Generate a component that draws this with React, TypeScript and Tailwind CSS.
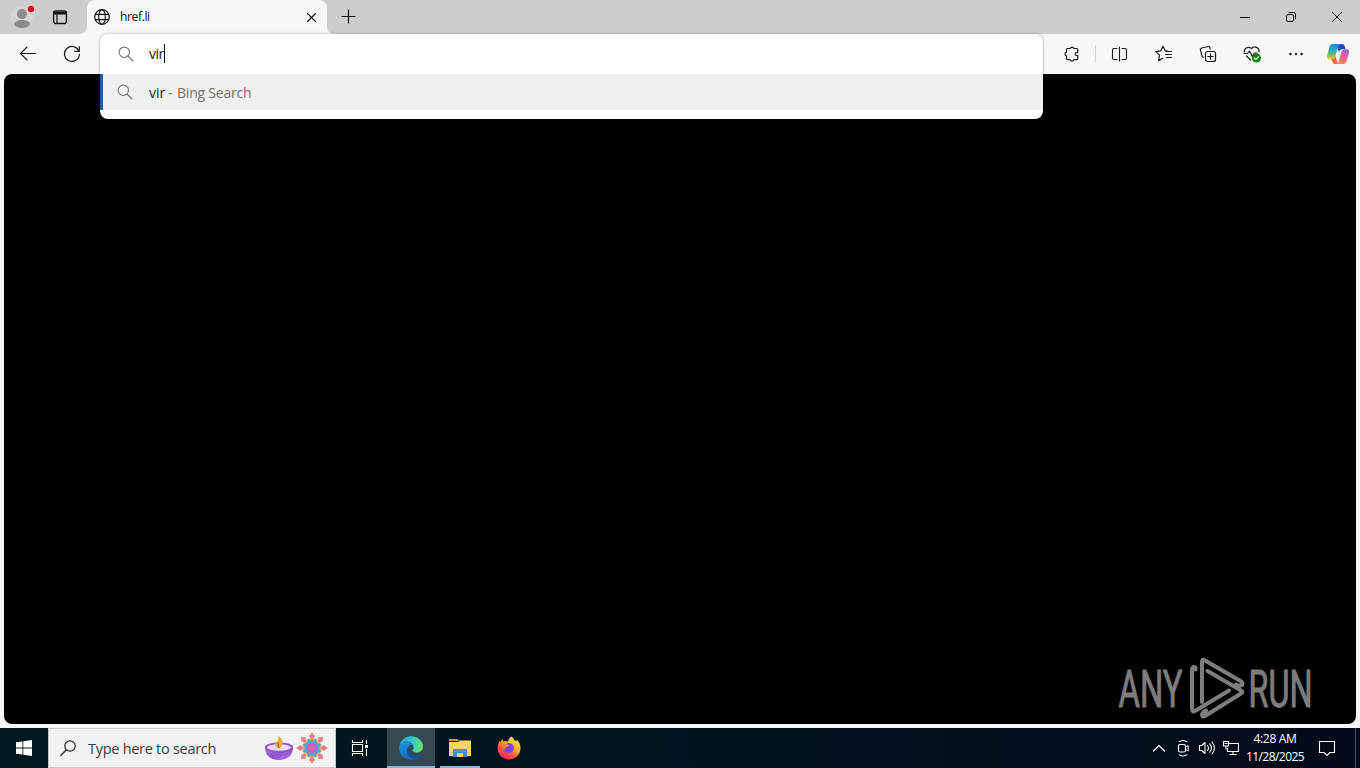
import React from 'react';

type IconProps = { w: number; h: number; children: React.ReactNode; className?: string };

function Icon({ w, h, children, className }: IconProps) {
  return (
    <svg width={w} height={h} viewBox={`0 0 ${w} ${h}`} fill="none" stroke="currentColor" strokeLinecap="round" strokeLinejoin="round" className={`shrink-0 ${className ?? ''}`}>
      {children}
    </svg>
  );
}

function Cell({ children, className }: { children: React.ReactNode; className: string }) {
  return <div className={`flex h-full shrink-0 items-center justify-center ${className}`}>{children}</div>;
}

function TabStrip() {
  return (
    <header className="flex h-[34px] bg-[#cdcdcd] text-[#111]">
      <Cell className="w-[44px]">
        <Icon w={28} h={28}>
          <circle cx="14" cy="14" r="11" fill="#d6d3d1" stroke="none" />
          <circle cx="14" cy="11" r="5" fill="#8f8b88" stroke="none" />
          <ellipse cx="14" cy="21" rx="8" ry="4" fill="#8f8b88" stroke="none" />
          <circle cx="23" cy="6" r="4.5" fill="#e2d3d3" stroke="none" />
          <circle cx="23" cy="6" r="3.2" fill="#d30b25" stroke="none" />
        </Icon>
      </Cell>
      <Cell className="w-[32px]">
        <Icon w={16} h={16}>
          <rect x="1.6" y="1.8" width="12.8" height="12.7" rx="2" strokeWidth="1.3" />
          <path d="M2 3.4h12M2 4.6h12" strokeWidth="1.6" />
          <path d="M5 5.5v8.5" strokeWidth="1.2" />
        </Icon>
      </Cell>
      <Icon w={11} h={34}>
        <path d="M3 34Q11 34 11 26V34Z" fill="#f7f7f7" stroke="none" />
      </Icon>
      <div className="flex w-[240px] shrink-0 items-center rounded-t-[8px] bg-[#f7f7f7] pr-[10px] pl-[7px]">
        <Icon w={16} h={16}>
          <circle cx="8" cy="8" r="7.3" strokeWidth="1.2" />
          <ellipse cx="8" cy="8" rx="3.3" ry="7.3" strokeWidth="1.1" />
          <path d="M1.5 5.4h13M1.5 10.6h13" strokeWidth="1.1" />
        </Icon>
        <span className="ml-[10px] flex-1 text-[12px] leading-4 tracking-[-0.35px]">href.li</span>
        <Icon w={12} h={12}>
          <path d="M2.5 2.5l8 8M10.500 2.500l-8 8" strokeWidth="1.1" />
        </Icon>
      </div>
      <Icon w={8} h={34}>
        <path d="M8 34Q0 34 0 26V34Z" fill="#f7f7f7" stroke="none" />
      </Icon>
      <Cell className="w-[27px]">
        <Icon w={16} h={16}>
          <path d="M7.500 1v13M1 7.500h13" strokeWidth="1.2" />
        </Icon>
      </Cell>
      <div className="flex-1" />
      <Cell className="w-[46px]">
        <Icon w={12} h={12}><path d="M1 6.5h10" strokeLinecap="butt" /></Icon>
      </Cell>
      <Cell className="w-[46px]">
        <Icon w={12} h={12}>
          <rect x="1.5" y="3.5" width="7" height="7" rx="1.5" />
          <path d="M4 1.5h4.5a2 2 0 0 1 2 2V8" />
        </Icon>
      </Cell>
      <Cell className="w-[46px]">
        <Icon w={12} h={12}><path d="M1.2 1.2l9.6 9.6M10.8 1.2L1.2 10.8" /></Icon>
      </Cell>
    </header>
  );
}

function CopilotIcon() {
  return (
    <svg width="24" height="22" viewBox="0 0 24 22">
      <defs>
        <linearGradient id="cpA" x1="0.4" y1="0" x2="0.3" y2="1">
          <stop offset="0" stopColor="#1b8de4" />
          <stop offset="0.4" stopColor="#24b0c7" />
          <stop offset="0.7" stopColor="#77bd55" />
          <stop offset="1" stopColor="#f2c91d" />
        </linearGradient>
        <linearGradient id="cpB" x1="0.8" y1="0" x2="0.3" y2="1">
          <stop offset="0" stopColor="#a35de0" />
          <stop offset="0.5" stopColor="#ed609b" />
          <stop offset="1" stopColor="#ff9355" />
        </linearGradient>
      </defs>
      <path d="M12 1h4c1.500 0 2.200.8 2.700 2.400l.9 2.800h-3.200c-2 0-2.700 1-3.300 3L11 4Z" fill="#1d4fb8" />
      <path d="M6.500 1h8.200c-1.700.4-2.300 2-2.900 4l-2.500 8c-.7 2.300-1.700 3.300-4 3.300H3.500C1 16.300 .5 14.500 1.200 12L3.400 4C4 2 4.800 1 6.500 1Z" fill="url(#cpA)" />
      <path d="M5 16.200c2.600 0 3.700-1 4.300-3.200l.7 2c.8 2.500 1 5 3 6H9.500c-1.700 0-2.400-.8-3-2.500Z" fill="#ee6540" />
      <path d="M17.500 21H10c1.700-.4 2.400-2 3-4l2.300-7.500c.7-2.300 1.700-3.300 4-3.300h1.300c2.400 0 2.900 1.700 2.200 4.200L20.600 18c-.6 2-1.400 3-3.100 3Z" fill="url(#cpB)" />
    </svg>
  );
}

function Toolbar() {
  return (
    <div className="flex h-10 bg-[#f7f7f7] pr-[2px] text-[#1b1b1b]">
      <Cell className="w-[56px]">
        <Icon w={18} h={16}><path d="M16.500 7.500H1.500M8 1L1.500 7.500 8 14" strokeWidth="1.100" /></Icon>
      </Cell>
      <Cell className="w-[32px]">
        <Icon w={18} h={18}>
          <path d="M16 6.200A7.500 7.500 0 1 0 16.500 9.300" strokeWidth="1.200" />
          <path d="M16.300 1.600v4.700h-4.700" strokeWidth="1.200" />
        </Icon>
      </Cell>
      <div className="flex-1" />
      <Cell className="w-[44px] pr-[1px]">
        <Icon w={19} h={18}>
          <path d="M4.500 3.500h2.700a1.900 1.900 0 0 1 3.700 0h2.800a1 1 0 0 1 1 1v3h-1a1.500 1.500 0 0 0 0 3h1v3.200a1 1 0 0 1-1 1h-2.800a1.900 1.900 0 0 1-3.700 0H4.500a1 1 0 0 1-1-1v-2.800a1.900 1.900 0 0 1 0-3.700V4.500a1 1 0 0 1 1-1Z" strokeWidth="1.200" />
        </Icon>
      </Cell>
      <div className="mr-[2px] my-[11px] w-px bg-[#d5d5d5]" />
      <Cell className="w-[44px]">
        <Icon w={18} h={16}>
          <path d="M6 2.500H3a1.500 1.500 0 0 0-1.500 1.500v8A1.500 1.500 0 0 0 3 13.500h3M11 2.500h3a1.500 1.500 0 0 1 1.500 1.500v8a1.500 1.500 0 0 1-1.500 1.500h-3M8.500 1v14" strokeWidth="1.100" />
        </Icon>
      </Cell>
      <Cell className="w-[44px]">
        <Icon w={18} h={18}>
          <path d="M12.300 6l-2-.3L8 1.300 5.800 5.800l-5 .8 3.700 3.500-.9 5.500 4.200-2.300" strokeWidth="1.200" />
          <path d="M11 6.500h5.500M10.500 9.500h6M11.500 12.500h5" strokeWidth="1.200" />
        </Icon>
      </Cell>
      <Cell className="w-[44px]">
        <Icon w={18} h={18}>
          <rect x="6.500" y="6.500" width="10" height="10" rx="2" strokeWidth="1.200" />
          <path d="M11.500 8.800v5.400M8.800 11.500h5.400" strokeWidth="1.200" />
          <path d="M11.200 4.200l-.4-1.700a1.400 1.400 0 0 0-1.700-1L2.700 3A1.500 1.500 0 0 0 1.400 4.900l1.600 6a2 2 0 0 0 1.300 1.400" strokeWidth="1.200" />
        </Icon>
      </Cell>
      <Cell className="w-[44px]">
        <Icon w={20} h={18}>
          <path d="M2.300 7A4.300 4.300 0 0 1 9.500 3.500 4.300 4.300 0 0 1 17 7M4.500 11l4 4" strokeWidth="1.200" />
          <path d="M2 8.500h3.500L7.500 6l2.800 5.500 2-3.500h3" strokeWidth="1.200" />
          <circle cx="14.500" cy="13" r="4.500" fill="#16811d" stroke="none" />
          <path d="M12.400 13l1.500 1.500 2.800-2.900" stroke="#e8f6e8" strokeWidth="1.100" />
        </Icon>
      </Cell>
      <Cell className="w-[44px]">
        <Icon w={16} h={4}>
          <g fill="#222" stroke="none"><circle cx="2.500" cy="2" r="1.300" /><circle cx="8" cy="2" r="1.300" /><circle cx="13.500" cy="2" r="1.300" /></g>
        </Icon>
      </Cell>
      <Cell className="w-[40px]"><CopilotIcon /></Cell>
    </div>
  );
}

function SearchGlyph() {
  return (
    <Icon w={16} h={16} className="text-[#707070]">
      <circle cx="6.300" cy="6.300" r="5.200" strokeWidth="1.100" />
      <path d="M10 10l5 5" strokeWidth="1.100" />
    </Icon>
  );
}

function AddressDropdown() {
  return (
    <div className="absolute top-[34px] left-[100px] h-[85px] w-[943px] overflow-hidden rounded-[8px] bg-white shadow-[0_0_3px_rgba(0,0,0,0.35)]">
      <div className="flex h-10 items-center pl-[18px]">
        <SearchGlyph />
        <span className="ml-[15px] w-[15px] text-[14px] leading-5 tracking-[-0.500px] text-[#1b1b1b]">vir</span>
        <span className="mb-[2px] h-[19px] w-px bg-black" />
      </div>
      <div className="flex h-9 items-center border-l-[3px] border-[#19609f] bg-[#f0f0f0] pb-[1px] pl-[14px]">
        <SearchGlyph />
        <span className="mt-[2px] ml-[16px] text-[14px] leading-5 text-[#1b1b1b]">
          vir <span className="-ml-px text-[#717171]">- </span><span className="ml-px tracking-[-0.230px] text-[#717171]">Bing Search</span>
        </span>
      </div>
    </div>
  );
}

function Watermark() {
  return (
    <svg width="198" height="64" viewBox="1118 657 198 64" fill="none" stroke="#7d7d7d" strokeWidth="4" strokeLinejoin="round" strokeLinecap="round" className="overflow-visible">
      <g fill="#7d7d7d" stroke="#7d7d7d" strokeWidth="1" fontFamily="Roboto, sans-serif" fontSize="51.500">
        <text x="1118.500" y="707" textLength="64" lengthAdjust="spacingAndGlyphs">ANY</text>
        <text x="1248.500" y="707" textLength="64" lengthAdjust="spacingAndGlyphs">RUN</text>
      </g>
      <path d="M1202 702V662q0-3.500 3-1.500L1240.500 681q3 2 1.500 4l-3 1-3-1.500" />
      <path d="M1207.500 671L1241 690.500q2.500 1.500 0 3L1205 716q-3 1.500-3-1.500l1-2 3-2" />
      <path d="M1195.500 669.500v-2q-3.500-1.500-3.500 2.500V709q0 3.500 3 2L1229 690.500" />
    </svg>
  );
}

function Diya() {
  return (
    <svg width="30" height="26" viewBox="0 0 30 26">
      <defs>
        <linearGradient id="bowl" x1="0" y1="0" x2="1" y2="1"><stop stopColor="#a769df" /><stop offset=".55" stopColor="#8c48cb" /><stop offset="1" stopColor="#ba89eb" /></linearGradient>
      </defs>
      <path d="M1 12c0 8 5 13 14 13s14-5 14-13Z" fill="url(#bowl)" />
      <ellipse cx="15" cy="12" rx="14" ry="4.500" fill="#9551ce" />
      <ellipse cx="15" cy="12.500" rx="12" ry="3.300" fill="#eadcf6" />
      <path d="M15 14c-5-3-4-6-1-9 .7-1.500.4-3 0-4 5 2 7 8 1 13Z" fill="#f5ad3e" />
      <path d="M14 7l.5 6" stroke="#b9603b" strokeWidth="1.200" />
      <path d="M4 18l3-.5 3 2 4-1 4 1 4-2 3 .5M10 22l5-1 5 1" stroke="#ab7bdc" strokeWidth=".7" fill="none" />
    </svg>
  );
}

const petals = [0, 45, 90, 135, 180, 225, 270, 315];

function Rangoli() {
  return (
    <svg width="32" height="32" viewBox="-16 -16 32 32">
      {petals.map((a) => (
        <g key={a} transform={`rotate(${a})`}>
          <path d="M0-13L4.500-6h-9Z" fill="#f7b94f" />
          <path d="M0-15.800l3 4L0-8-3-11.800Z" fill="#ea7d90" />
        </g>
      ))}
      {petals.map((a) => (
        <path key={a} d="M0-10.500L3.500-5h-7Z" fill="#4aaccb" transform={`rotate(${a + 22.5})`} />
      ))}
      <circle r="7.500" fill="#53a5d1" />
      {petals.map((a) => (
        <path key={a} d="M0-7l2.500 4h-5Z" fill="#a56bce" transform={`rotate(${a})`} />
      ))}
      <circle r="4.500" fill="#c465bd" />
      <circle r="2" fill="#e3649b" />
    </svg>
  );
}

function EdgeLogo() {
  return (
    <svg width="24" height="24" viewBox="0 0 24 24">
      <defs>
        <linearGradient id="edTop" x1="0" y1=".4" x2="1" y2=".5"><stop stopColor="#279fd9" /><stop offset=".5" stopColor="#35c6cf" /><stop offset="1" stopColor="#65e36b" /></linearGradient>
        <linearGradient id="edBody" x1="0" y1="0" x2=".6" y2="1"><stop stopColor="#1c9de0" /><stop offset="1" stopColor="#0f5eb5" /></linearGradient>
      </defs>
      <path d="M.2 11C1 4.500 6 .2 12 .2c7 0 12 5 12 10.300 0 4-3 6-6.300 6-2.700 0-4.200-.9-4.200-1.900 0-.8 1.100-1.100 1.100-3.100C14.600 8.200 11.500 5.500 7.500 5.500 4 5.500 1.300 7.500.2 11Z" fill="url(#edTop)" />
      <path d="M.1 12.500C0 8.300 3.700 5.800 7.500 5.800c3.600 0 6 2 6.800 4-1-1.200-4-.9-5.300 1.400-2.700 4.900 2 11 8 10 1.700-.3 3-.9 4.200-1.700C19.200 22.100 16 24 12 24 5.600 24 .2 18.800.1 12.500Z" fill="url(#edBody)" />
      <path d="M9.300 10.800c-3.600 4.200-.9 11.500 6 11.500 2.600 0 4.800-1 6.300-3 .5-.7 0-1.200-.7-.8-5.500 2.700-12-.6-11.600-7.700Z" fill="#134f94" />
    </svg>
  );
}

function FolderIcon() {
  return (
    <svg width="22" height="20" viewBox="0 0 22 20">
      <path d="M0 1.500Q0 1 .6 1h8l1.600 2H0Z" fill="#e39b1d" />
      <path d="M0 4h9l1.500-1.500h11q.5 0 .5.600V18H0Z" fill="#fbd36b" />
      <path d="M4 19v-7q0-1 1-1h12q1 0 1 1v7h-4v-4H8v4Z" fill="#3b8dc7" />
      <path d="M8 19v-4h6v4Z" fill="#fbd36b" />
      <path d="M5 13h12" stroke="#62a6d4" strokeWidth="1" />
    </svg>
  );
}

function FirefoxIcon() {
  return (
    <svg width="24" height="24" viewBox="0 0 24 24">
      <defs>
        <linearGradient id="ff" x1=".85" y1="0" x2=".2" y2="1"><stop stopColor="#ffef43" /><stop offset=".4" stopColor="#ffaf29" /><stop offset=".68" stopColor="#ff513f" /><stop offset="1" stopColor="#f21780" /></linearGradient>
      </defs>
      <path d="M14.500.5c1.500 1 2.300 2.400 2.700 4 1.200-.2 2 .3 2.600 1.200-.1-1-.4-1.800-.8-2.500C22 5 23.500 8.500 23.500 12.300 23.500 18.700 18.300 23.500 12 23.500S.5 18.600.5 12.300c0-3 .9-5.500 2.600-7.800-.2 1 0 1.500.3 2C4 4.800 4.600 3.800 5.600 3c0 1 .3 2 .9 2.500C8.300 4.600 9.900 4.800 11 5.800 11.300 3.600 12.500 1.700 14.500.5Z" fill="url(#ff)" />
      <path d="M8.500 8.500C10 6 15 6.500 16.300 9.500s0 7-3.500 7.300-6-1-6-4.300Z" fill="#7843d8" />
      <path d="M4.500 8.500c2-1.200 4-.9 5.500.1l2.600.2c-.2 1.600-2 1.700-2.900 2.200-.8.500-1.300 1.500-3 3Z" fill="#ff8132" />
    </svg>
  );
}

function Taskbar() {
  return (
    <footer className="flex h-10 bg-linear-to-r from-[#021820] via-[#02141f] to-[#020a19] text-white">
      <Cell className="w-[48px]">
        <svg width="16" height="16" viewBox="0 0 16 16" fill="#fff"><path d="M0 2.300L6.500 1.400V7.500H0ZM7.300 1.300L16 0V7.500H7.300ZM0 8.400H6.500V14.600L0 13.700ZM7.300 8.400H16V16L7.300 14.700Z" /></svg>
      </Cell>
      <div className="flex w-[288px] shrink-0 items-center border border-[#c9c9c9] bg-[#f2f2f2] pl-[11px] text-[#3c3c3c]">
        <Icon w={16} h={17} className="text-[#222]">
          <circle cx="10" cy="6" r="5.200" strokeWidth="1.200" />
          <path d="M6.200 10L.8 15.500" strokeWidth="1.200" />
        </Icon>
        <span className="mt-[1px] ml-[12px] w-[176px] text-[14.500px] leading-5 whitespace-nowrap tracking-[-0.280px]">Type here to search</span>
        <div className="flex items-center gap-[2px]"><Diya /><Rangoli /></div>
      </div>
      <Cell className="w-[48px]">
        <Icon w={18} h={16}>
          <path d="M1.500 0v2.500h10V0M1.500 16v-2.500h10V16M1.500 4.500h10v7h-10ZM15.500 0v4M15.500 9v7" strokeLinecap="butt" strokeLinejoin="miter" strokeWidth="1.100" />
          <path d="M14 5h3v3h-3Z" fill="#fff" stroke="none" />
        </Icon>
      </Cell>
      <div className="ml-[3px] flex w-[48px] shrink-0 items-center justify-center border-b-2 border-[#76b9ed] bg-[#334850] pt-[2px]"><EdgeLogo /></div>
      <div className="mx-[5px] flex w-[40px] shrink-0 items-center justify-center border-b-2 border-[#76b9ed] pt-[2px]"><FolderIcon /></div>
      <Cell className="w-[48px]"><FirefoxIcon /></Cell>
      <div className="flex-1" />
      <Cell className="w-[24px]">
        <Icon w={14} h={8}><path d="M1.500 7L7 1.500 12.500 7" strokeWidth="1.200" /></Icon>
      </Cell>
      <Cell className="w-[24px]">
        <Icon w={16} h={18}>
          <rect x="3.500" y="5.500" width="7" height="7.500" rx="1.500" strokeWidth="1.200" />
          <path d="M10.700 8l2.500-1.500v5.500l-2.500-1.500M4 2.500q4-2.500 8 0M4 16q4 2.500 8 0" />
        </Icon>
      </Cell>
      <Cell className="w-[24px]">
        <Icon w={18} h={16}>
          <path d="M1.500 5.500h2.300L7 2.500v11l-3.200-3H1.500ZM9.500 5.500q2 2.500 0 5M11.800 3.800q3.300 4.200 0 8.400M14 2q5 6 0 12" strokeWidth="1.100" />
        </Icon>
      </Cell>
      <Cell className="w-[24px]">
        <Icon w={16} h={16}>
          <path d="M6 3.500h9.500v8H4.500V8M10 11.500v3M6.500 14.500h7M.5 1.500h5v4.500h-5ZM3 6v3.500M1.500 3.500h3" strokeLinejoin="miter" strokeLinecap="butt" strokeWidth="1.100" />
        </Icon>
      </Cell>
      <div className="flex w-[64px] shrink-0 flex-col items-center pt-[2px] text-[12px] leading-[18px] tracking-[-0.550px] whitespace-nowrap">
        <span className="tracking-[-0.300px]">4:28 AM</span>
        <span>11/28/2025</span>
      </div>
      <Cell className="w-[40px]">
        <Icon w={18} h={17}><path d="M1.500 1.500h15v11h-4.500l-3 3-3-3H1.500Z" strokeWidth="1.100" strokeLinejoin="miter" /></Icon>
      </Cell>
      <div className="mr-[4px] ml-[8px] w-px bg-[#465364]" />
    </footer>
  );
}

export default function App() {
  return (
    <div className="relative flex h-[768px] w-[1360px] flex-col overflow-hidden bg-[#f7f7f7] font-['Open_Sans','Noto_Sans',sans-serif]">
      <TabStrip />
      <Toolbar />
      <main className="mx-1 mb-1 flex flex-1 items-end justify-end rounded-[8px] bg-black pr-[40px] pb-[3px]">
        <Watermark />
      </main>
      <Taskbar />
      <AddressDropdown />
    </div>
  );
}
